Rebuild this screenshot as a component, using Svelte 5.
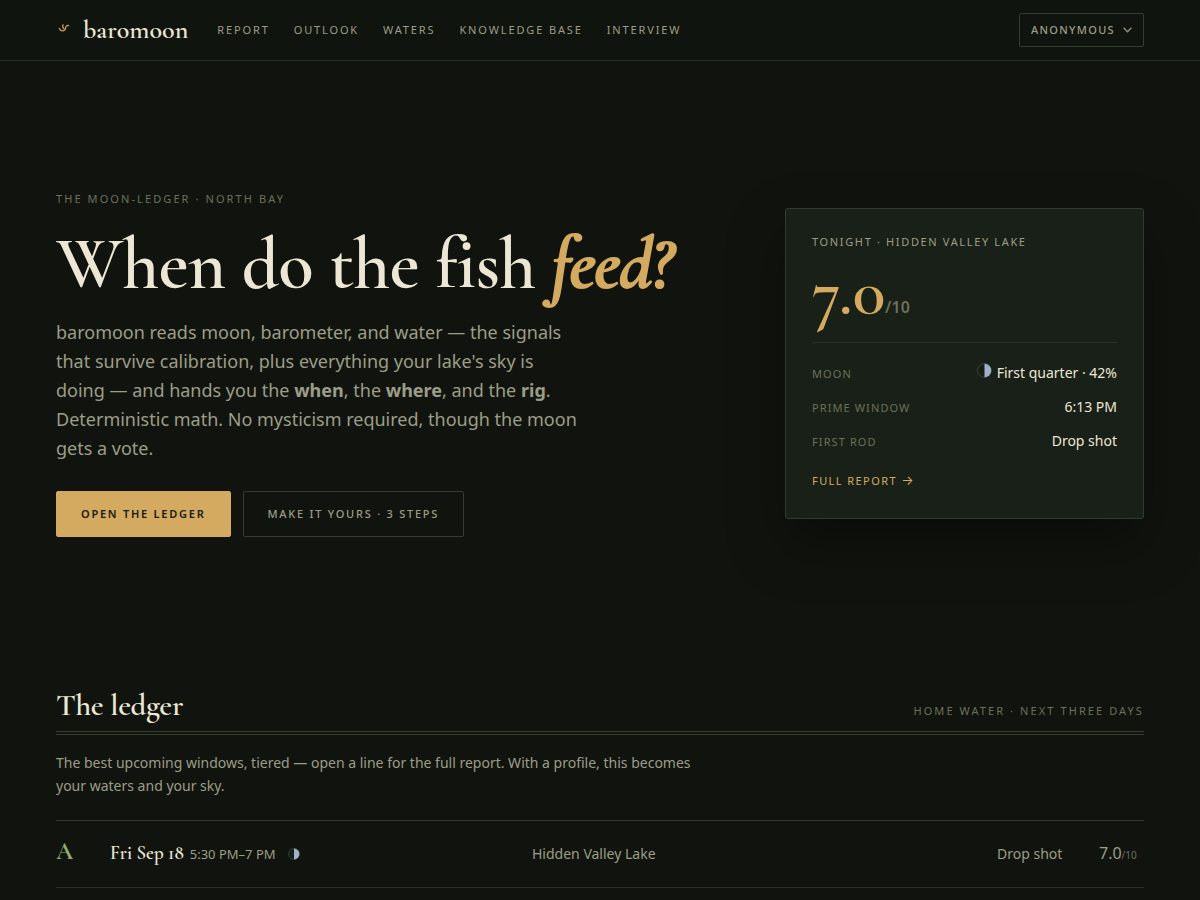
<script>
  const links = ['Report', 'Outlook', 'Waters', 'Knowledge base', 'Interview'];
  const facts = [
    { name: 'Moon', value: 'First quarter · 42%', moon: true },
    { name: 'Prime window', value: '6:13 PM' },
    { name: 'First rod', value: 'Drop shot' }
  ];
</script>

{#snippet moon(size)}
  <svg class="moon" width={size} height={size} viewBox="0 0 16 16" aria-hidden="true">
    <circle cx="8" cy="8" r="7.4" fill="#171e18" stroke="#3a473f" stroke-width="1" />
    <path d="M8 .8a7.2 7.2 0 0 1 0 14.4z" fill="#9fb2c8" />
  </svg>
{/snippet}

<header>
  <a class="brand" href="#top">
    <svg width="16" height="16" viewBox="0 0 16 16" fill="none" stroke="#c2955a" stroke-width="1.3" stroke-linecap="round" aria-hidden="true">
      <path d="M3.2 8.3Q4 10.7 6.5 10.8Q9.4 10.7 9.6 8Q9.7 5.3 12.6 5.5" />
      <path d="M7.1 4.7Q5.8 7 8 8.8" />
    </svg>
    <span>baromoon</span>
  </a>
  <nav>
    {#each links as link}
      <a href="#top">{link}</a>
    {/each}
  </nav>
  <button class="account" type="button">
    Anonymous
    <svg width="9" height="6" viewBox="0 0 9 6" fill="none" stroke="#8f927d" stroke-width="1.3" aria-hidden="true">
      <path d="M.6.7 4.5 4.8 8.4.7" />
    </svg>
  </button>
</header>

<main id="top">
  <section class="hero">
    <div class="intro">
      <p class="eyebrow">The moon-ledger · North Bay</p>
      <h1>When do the fish <em>feed?</em></h1>
      <p class="lead">
        baromoon reads moon, barometer, and water — the signals that survive calibration, plus
        everything your lake's sky is doing — and hands you the <strong>when</strong>, the
        <strong>where</strong>, and the <strong>rig</strong>. Deterministic math. No mysticism
        required, though the moon gets a vote.
      </p>
      <div class="actions">
        <a class="button primary" href="#ledger">Open the ledger</a>
        <a class="button" href="#top">Make it yours · 3 steps</a>
      </div>
    </div>

    <aside class="card">
      <h2>Tonight · Hidden Valley Lake</h2>
      <p class="score">7.0<small>/10</small></p>
      <dl>
        {#each facts as fact}
          <div>
            <dt>{fact.name}</dt>
            <dd>{#if fact.moon}{@render moon(15)}{/if}{fact.value}</dd>
          </div>
        {/each}
      </dl>
      <a class="full" href="#top">Full report <span class="arrow">→</span></a>
    </aside>
  </section>

  <section class="ledger" id="ledger">
    <div class="heading">
      <h2>The ledger</h2>
      <p>Home water · next three days</p>
    </div>
    <p class="note">
      The best upcoming windows, tiered — open a line for the full report. With a profile, this
      becomes your waters and your sky.
    </p>
    <ul>
      <li>
        <a class="row" href="#top">
          <span class="tier">A</span>
          <span class="when"><b>Fri Sep 18</b><span class="time">5:30 PM–7 PM</span>{@render moon(12)}</span>
          <span class="place">Hidden Valley Lake</span>
          <span class="rig">Drop shot</span>
          <span class="rating">7.0<small>/10</small></span>
        </a>
      </li>
    </ul>
  </section>
</main>

<style>
  :global(body) {
    margin: 0;
    background: #11140e;
    color: #ece7d5;
    font: 14px/24px 'Noto Sans', sans-serif;
  }
  :global(html) {
    overflow-x: hidden;
  }
  h1, h2, p, dl, dd, ul {
    margin: 0;
    padding: 0;
  }
  h1, .brand, .score, .heading h2, .tier, .when b {
    font-family: 'Cormorant Garamond', 'Liberation Serif', serif;
    font-weight: 600;
  }
  a {
    color: inherit;
    text-decoration: none;
  }
  header {
    display: flex;
    align-items: center;
    box-sizing: border-box;
    min-height: 61px;
    padding: 0 56px;
    border-bottom: 1px solid #263020;
    background: #10140e;
  }
  .brand {
    display: flex;
    align-items: center;
    gap: 11px;
    margin-right: 29px;
    font-size: 26px;
    line-height: 32px;
  }
  .brand svg {
    margin-bottom: 4px;
  }
  nav {
    display: flex;
    flex: 1;
    gap: 24px;
  }
  nav a, .account, .eyebrow, .button, .card h2, dt, .full, .heading p {
    font-family: 'Noto Sans', sans-serif;
    font-size: 11px;
    font-weight: 400;
    line-height: 18px;
    letter-spacing: 0.17em;
    text-transform: uppercase;
    color: #9c9d87;
  }
  .account {
    display: flex;
    align-items: center;
    gap: 8px;
    padding: 7px 11px;
    border: 1px solid #343d30;
    border-radius: 2px;
    background: none;
    font-weight: 500;
    letter-spacing: 0.12em;
  }
  .hero {
    display: grid;
    grid-template-columns: minmax(0, 1fr) 359px;
    align-items: center;
    gap: 64px;
    padding: 129px 56px 149px;
  }
  .eyebrow, .heading p {
    letter-spacing: 0.19em;
    color: #6d705c;
  }
  h1 {
    margin: 18px 0 16px;
    font-size: 73px;
    line-height: 76px;
    letter-spacing: -0.01em;
    white-space: nowrap;
  }
  h1 em {
    -webkit-text-stroke: 2px #d4aa60;
    color: #d4aa60;
  }
  .lead {
    max-width: 528px;
    font-size: 18px;
    line-height: 29px;
    color: #9c9d87;
  }
  .actions {
    display: flex;
    gap: 12px;
    margin-top: 28px;
  }
  .button {
    padding: 13px 24px;
    border: 1px solid #343d30;
    border-radius: 2px;
    font-weight: 500;
    letter-spacing: 0.16em;
  }
  .primary {
    border-color: #d4aa60;
    background: #d4aa60;
    color: #171a10;
    font-weight: 600;
  }
  .card {
    padding: 24px 26px 26px;
    border: 1px solid #303c30;
    border-radius: 3px;
    background: #192017;
    box-shadow: 0 24px 56px rgba(0, 0, 0, 0.4);
  }
  .score {
    margin-top: 6px;
    padding-bottom: 15px;
    border-bottom: 1px solid #29322a;
    font-size: 68px;
    line-height: 70px;
    color: #d4aa60;
  }
  .score small {
    font: 600 16px/16px 'Noto Sans', sans-serif;
    color: #6d705c;
  }
  dl {
    padding: 13px 0 10px;
  }
  dl div {
    display: flex;
    align-items: baseline;
    justify-content: space-between;
    padding: 5px 0;
  }
  dt {
    color: #6d705c;
    letter-spacing: 0.1em;
  }
  dd .moon {
    margin-right: 5px;
  }
  .full {
    color: #d4aa60;
    letter-spacing: 0.13em;
  }
  .arrow {
    font-family: Inter, sans-serif;
    font-size: 13px;
  }
  .card h2 {
    letter-spacing: 0.15em;
  }
  .ledger {
    padding: 0 56px 12px;
  }
  .heading {
    display: flex;
    align-items: baseline;
    justify-content: space-between;
    padding-bottom: 7px;
    border-bottom: 4px double #343d2b;
  }
  .heading h2 {
    font-size: 31px;
    line-height: 38px;
    letter-spacing: -0.01em;
  }
  .note {
    max-width: 640px;
    margin: 16px 0 23px;
    line-height: 23px;
    color: #9c9d87;
  }
  ul {
    border-top: 1px solid #343a30;
    list-style: none;
  }
  li {
    border-bottom: 1px solid #2a3027;
  }
  .row {
    display: grid;
    grid-template-columns: 38px minmax(0, 406fr) minmax(0, 449fr) 86px 37px;
    column-gap: 16px;
    align-items: baseline;
    padding: 16px 8px 17px 0;
    line-height: 30px;
    color: #9c9d87;
  }
  .tier {
    font-size: 24px;
    font-weight: 700;
    color: #8fae6b;
  }
  .when b {
    margin-right: 6px;
    font-size: 19px;
    color: #ece7d5;
  }
  .time {
    margin-right: 12px;
    font-size: 13px;
  }
  .when .moon {
    vertical-align: -1px;
  }
  .rating {
    font-size: 16px;
    text-align: right;
  }
  .rating small {
    font-size: 10px;
    color: #6d705c;
  }
</style>
